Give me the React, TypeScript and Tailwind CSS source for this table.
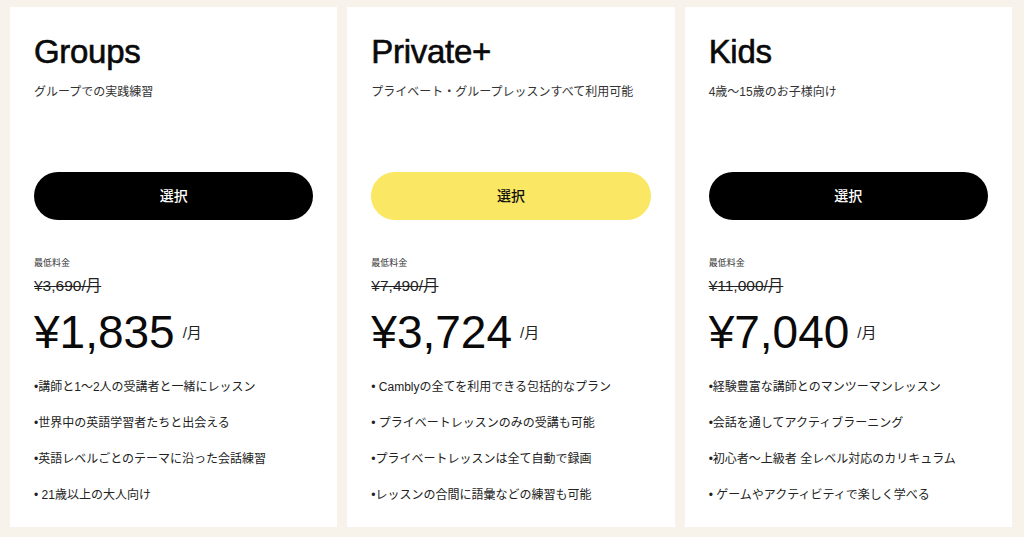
import React from "react";

interface Plan {
    name: string;
    tagline: string;
    oldPrice: string;
    price: string;
    highlight?: boolean;
    features: string[];
}

const plans: Plan[] = [
    {
        name: "Groups",
        tagline: "グループでの実践練習",
        oldPrice: "¥3,690/月",
        price: "¥1,835",
        features: [
            "•講師と1〜2人の受講者と一緒にレッスン",
            "•世界中の英語学習者たちと出会える",
            "•英語レベルごとのテーマに沿った会話練習",
            "• 21歳以上の大人向け",
        ],
    },
    {
        name: "Private+",
        tagline: "プライベート・グループレッスンすべて利用可能",
        oldPrice: "¥7,490/月",
        price: "¥3,724",
        highlight: true,
        features: [
            "• Camblyの全てを利用できる包括的なプラン",
            "• プライベートレッスンのみの受講も可能",
            "•プライベートレッスンは全て自動で録画",
            "•レッスンの合間に語彙などの練習も可能",
        ],
    },
    {
        name: "Kids",
        tagline: "4歳〜15歳のお子様向け",
        oldPrice: "¥11,000/月",
        price: "¥7,040",
        features: [
            "•経験豊富な講師とのマンツーマンレッスン",
            "•会話を通してアクティブラーニング",
            "•初心者〜上級者 全レベル対応のカリキュラム",
            "• ゲームやアクティビティで楽しく学べる",
        ],
    },
];

const PlanCard: React.FC<{ plan: Plan }> = ({ plan }) => {
    return (
        <div className="bg-white h-[520px] px-6 pt-[25px] flex flex-col">
            <h2 className="text-[33px] leading-[40px] text-[#0a0a0a] tracking-[-0.3px] [-webkit-text-stroke:0.6px_#0a0a0a]">
                {plan.name}
            </h2>
            <p className="mt-[11px] text-[12px] leading-[18px] text-[#333]">
                {plan.tagline}
            </p>
            <button
                className={
                    plan.highlight
                        ? "mt-[71px] h-12 w-full rounded-full bg-[#fae764] text-[#111] text-[14px] font-medium"
                        : "mt-[71px] h-12 w-full rounded-full bg-black text-white text-[14px] font-medium"
                }
            >
                選択
            </button>
            <p className="mt-[37px] text-[9px] leading-[12px] text-[#333]">
                最低料金
            </p>
            <p className="mt-[7px] text-[15.5px] leading-[20px] text-[#222] line-through">
                {plan.oldPrice}
            </p>
            <div className="mt-[14px] flex items-end gap-[8px] h-[44px]">
                <span className="text-[46px] leading-[44px] text-[#0a0a0a]">
                    {plan.price}
                </span>
                <span className="text-[15px] leading-[15px] mb-[14px] text-[#222]">
                    /月
                </span>
            </div>
            <ul className="mt-[24px] flex flex-col gap-[18px]">
                {plan.features.map((f) => (
                    <li key={f} className="text-[12px] leading-[18px] text-[#222]">
                        {f}
                    </li>
                ))}
            </ul>
        </div>
    );
};

export default function App() {
    return (
        <div
            className="w-[1024px] h-[537px] bg-[#f8f3ea] pl-[10px] pr-[12px] pt-[7px] overflow-hidden"
            style={{ fontFamily: '"Liberation Sans", "Noto Sans CJK JP", sans-serif' }}
        >
            <div className="grid grid-cols-3 gap-[10px]">
                {plans.map((p) => (
                    <PlanCard key={p.name} plan={p} />
                ))}
            </div>
        </div>
    );
}
